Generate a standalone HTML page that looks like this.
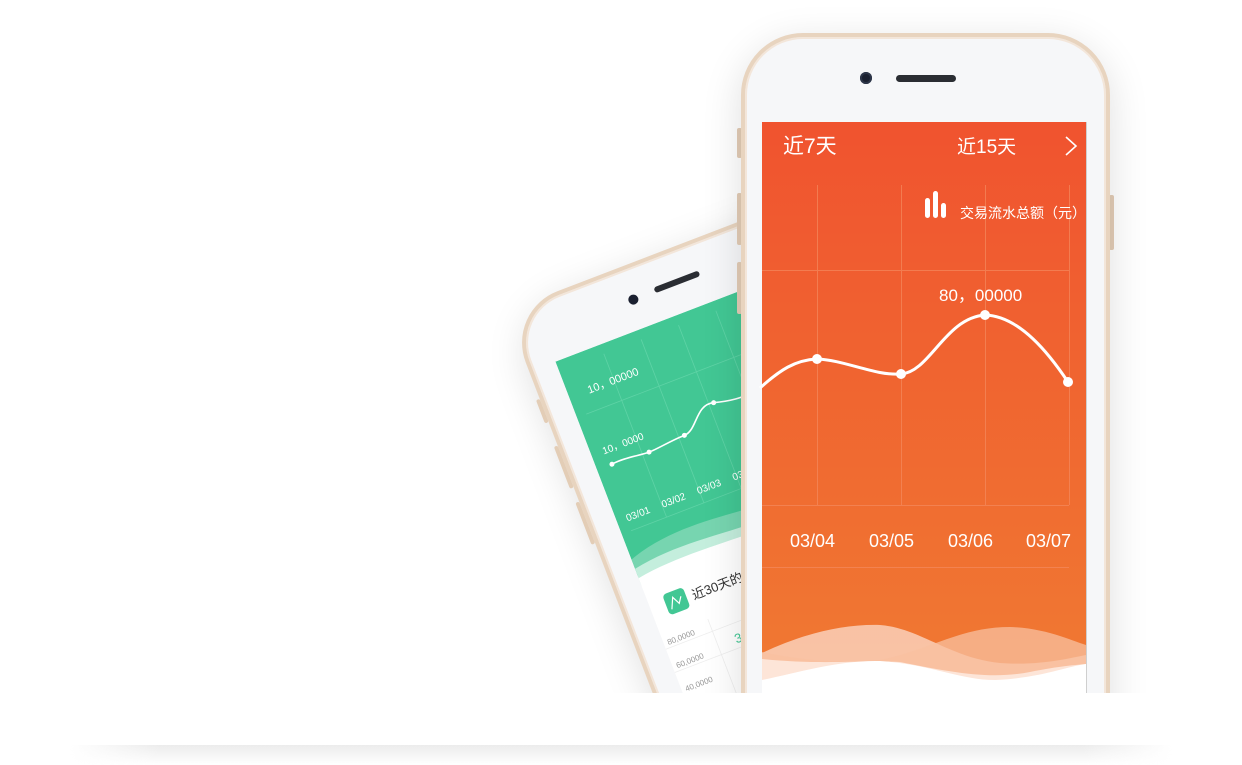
<!DOCTYPE html>
<html><head><meta charset="utf-8"><style>
html,body{margin:0;padding:0;background:#fff;width:1242px;height:765px;overflow:hidden;font-family:"Liberation Sans","Noto Sans CJK SC",sans-serif}
.shad{position:absolute;left:70px;top:745px;width:1102px;height:20px;background:linear-gradient(#ececec,rgba(255,255,255,0));-webkit-mask-image:linear-gradient(90deg,transparent,#000 8%,#000 92%,transparent);mask-image:linear-gradient(90deg,transparent,#000 8%,#000 92%,transparent)}
.clip{position:absolute;left:0;top:0;width:1242px;height:693px;overflow:hidden}
.phone{position:absolute;border-radius:62px;background:#f6f7f9;border:4px solid #e8d4bf;box-shadow:0 0 0 2px #f3e6da inset,0 10px 40px rgba(0,0,0,0.13)}
.btn{position:absolute;background:#e3cdb6;border-radius:2px}
</style></head><body>
<div class="shad"></div>
<div class="clip">
  <div style="position:absolute;left:506px;top:311px;width:0;height:0;transform:rotate(-21deg);transform-origin:0 0">
    <div class="phone" style="left:0;top:0;width:330px;height:680px;border-radius:55px">
      <div class="btn" style="left:-8px;top:90px;width:4px;height:25px"></div>
      <div class="btn" style="left:-8px;top:140px;width:4px;height:45px"></div>
      <div class="btn" style="left:-8px;top:200px;width:4px;height:45px"></div>
      <div style="position:absolute;left:114px;top:26px;width:10px;height:10px;border-radius:50%;background:#1a2030"></div>
      <div style="position:absolute;left:142px;top:27px;width:48px;height:6px;border-radius:3px;background:#2a2d33"></div>
      <svg style="position:absolute;left:24px;top:61px" width="290" height="560" viewBox="0 0 290 560">
        <rect x="0" y="0" width="290" height="560" fill="#fff"/>
        <rect x="0" y="0" width="290" height="230" fill="#42c794"/>
        <g stroke="#5fd3a6" stroke-width="0.8">
          <line x1="48" y1="10" x2="48" y2="185"/><line x1="88" y1="10" x2="88" y2="185"/><line x1="128" y1="10" x2="128" y2="185"/><line x1="168" y1="10" x2="168" y2="185"/><line x1="208" y1="10" x2="208" y2="185"/>
          <line x1="10" y1="60" x2="280" y2="60"/><line x1="10" y1="185" x2="280" y2="185"/>
        </g>
        <g fill="#fff"><rect x="190" y="26" width="2" height="10"/><rect x="194" y="22" width="2" height="14"/><rect x="198" y="28" width="2" height="8"/></g>
        <text x="20" y="42" fill="#fff" font-size="11">10，00000</text>
        <text x="12" y="104" fill="#fff" font-size="10">10，0000</text>
        <path d="M16 116 C30 114 45 118 55 118 S80 115 94 115 S115 90 133 95 S160 100 172 100" fill="none" stroke="#fff" stroke-width="1.6"/>
        <g fill="#fff"><circle cx="16" cy="116" r="2.5"/><circle cx="55" cy="118" r="2.5"/><circle cx="94" cy="115" r="2.5"/><circle cx="133" cy="95" r="2.5"/></g>
        <g fill="#fff" font-size="10"><text x="10" y="175">03/01</text><text x="48" y="175">03/02</text><text x="86" y="175">03/03</text><text x="124" y="175">03/04</text></g>
        <path d="M0 212 C50 195 100 205 150 208 S230 190 290 195 L290 230 L0 230Z" fill="#8edcbc" opacity=".7"/>
        <path d="M0 222 C60 210 120 228 180 220 S250 212 290 215 L290 240 L0 240Z" fill="#c4eedd"/>
        <path d="M0 232 C60 222 130 236 180 228 S260 224 290 226 L290 250 L0 250Z" fill="#fff"/>
        <rect x="16" y="256" width="22" height="22" rx="4" fill="#42c794"/>
        <path d="M20 273 L25 262 L29 270 L33 264" stroke="#fff" fill="none" stroke-width="1.2"/>
        <text x="44" y="272" font-size="13" fill="#333">近30天的经营状况</text>
        <g stroke="#eee" stroke-width="0.8"><line x1="0" y1="308" x2="290" y2="308"/><line x1="0" y1="333" x2="290" y2="333"/><line x1="50" y1="295" x2="50" y2="380"/><line x1="120" y1="295" x2="120" y2="380"/></g>
        <g font-size="8" fill="#999"><text x="4" y="305">80,0000</text><text x="4" y="330">60,0000</text><text x="4" y="355">40,0000</text></g>
        <text x="68" y="328" font-size="13" fill="#42c794">38,000</text>
      </svg>
    </div>
  </div>
  <div class="btn" style="left:737px;top:128px;width:5px;height:30px"></div>
  <div class="btn" style="left:737px;top:193px;width:5px;height:52px"></div>
  <div class="btn" style="left:737px;top:262px;width:5px;height:52px"></div>
  <div class="btn" style="left:1109px;top:195px;width:5px;height:55px"></div>
  <div class="phone" style="left:741px;top:33px;width:361px;height:760px"></div>
  <div style="position:absolute;left:860px;top:72px;width:12px;height:12px;border-radius:50%;background:#1a2030;box-shadow:inset 0 0 0 2px #2c3548"></div>
  <div style="position:absolute;left:896px;top:75px;width:60px;height:7px;border-radius:4px;background:#2a2d33"></div>
  <svg style="position:absolute;left:0;top:0" width="1242" height="693" viewBox="0 0 1242 693">
    <defs><linearGradient id="og" x1="0" y1="0" x2="0" y2="1"><stop offset="0" stop-color="#f0532f"/><stop offset="1" stop-color="#f07a32"/></linearGradient></defs>
    <rect x="762" y="122" width="324" height="571" fill="url(#og)"/>
    <line x1="1086.5" y1="122" x2="1086.5" y2="693" stroke="#cfcfcf"/>
    <g stroke="#f58a5e" stroke-width="1" opacity=".7">
      <line x1="817.5" y1="185" x2="817.5" y2="505"/><line x1="901.5" y1="185" x2="901.5" y2="505"/><line x1="985.5" y1="185" x2="985.5" y2="505"/><line x1="1069.5" y1="185" x2="1069.5" y2="505"/>
      <line x1="762" y1="270.5" x2="1069" y2="270.5"/><line x1="762" y1="505.5" x2="1069" y2="505.5"/><line x1="762" y1="567.5" x2="1069" y2="567.5"/>
    </g>
    <text x="783" y="153" fill="#fff" font-size="21">近7天</text>
    <text x="957" y="153" fill="#fff" font-size="19">近15天</text>
    <path d="M1066 137 L1076 146 L1066 155" stroke="#fff" stroke-width="1.6" fill="none"/>
    <g fill="#fff"><rect x="925" y="198" width="5" height="20" rx="2.5"/><rect x="933" y="191" width="5" height="27" rx="2.5"/><rect x="941" y="203" width="5" height="15" rx="2.5"/></g>
    <text x="960" y="218" fill="#fff" font-size="14">交易流水总额（元）</text>
    <text x="939" y="301" fill="#fff" font-size="17">80，00000</text>
    <path d="M760 388 C780 370 795 360 817 359 C845 360 875 376 901 374 C930 372 945 318 985 315 C1020 316 1050 355 1068 382" fill="none" stroke="#fff" stroke-width="3"/>
    <g fill="#fff"><circle cx="817" cy="359" r="5"/><circle cx="901" cy="374" r="5"/><circle cx="985" cy="315" r="5"/><circle cx="1068" cy="382" r="5"/></g>
    <g fill="#fff" font-size="18"><text x="790" y="547">03/04</text><text x="869" y="547">03/05</text><text x="948" y="547">03/06</text><text x="1026" y="547">03/07</text></g>
    <path d="M762 653 C800 635 840 624 880 625 C920 628 950 658 1000 663 C1040 666 1070 658 1086 655 L1086 693 L762 693Z" fill="#fbd6c2" opacity=".8"/>
    <path d="M762 652 C800 660 840 664 880 660 C930 650 960 627 1010 627 C1045 628 1070 640 1086 645 L1086 693 L762 693Z" fill="#f8c0a0" opacity=".75"/>
    <path d="M762 659 C820 665 860 660 900 662 C950 672 990 680 1030 672 C1060 666 1075 665 1086 664 L1086 693 L762 693Z" fill="#fde5d8"/>
    <path d="M762 680 C800 672 840 660 880 661 C930 664 960 680 995 680 C1040 678 1065 667 1086 664 L1086 693 L762 693Z" fill="#fff"/>
  </svg>
</div>
</body></html>
